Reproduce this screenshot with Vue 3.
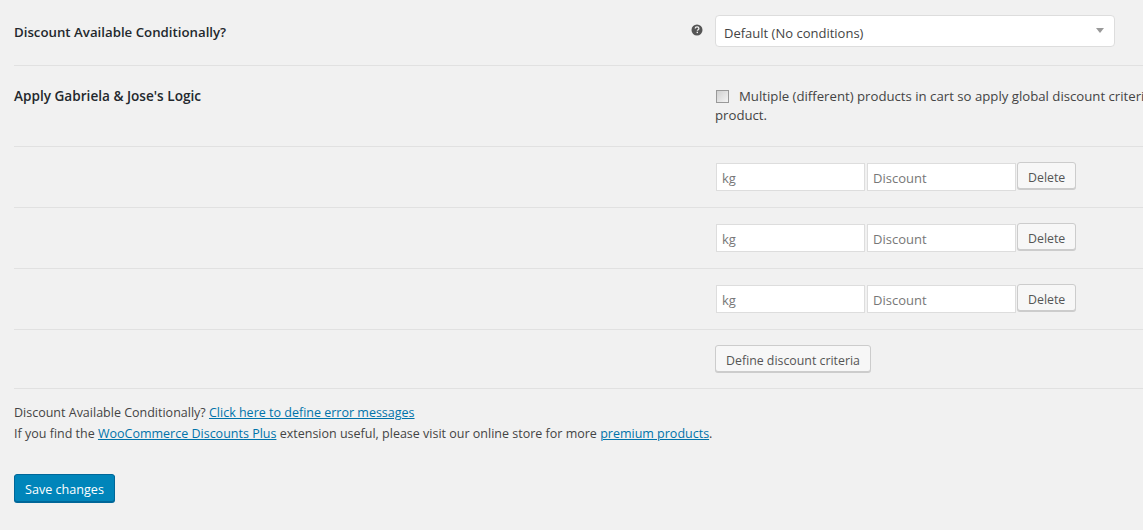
<template>
  <div class="page">
    <div class="row row-select">
      <div class="label">Discount Available Conditionally?</div>
      <div class="tip">
        <svg width="12" height="12" viewBox="0 0 12 12">
          <circle cx="6" cy="6" r="5.5" fill="#555" />
          <path d="M4.2 4.6c0-1.1.8-1.7 1.9-1.7s1.8.6 1.8 1.5c0 1.3-1.5 1.3-1.5 2.4" fill="none" stroke="#f1f1f1" stroke-width="1.3" />
          <rect x="5.6" y="7.7" width="1.4" height="1.4" fill="#f1f1f1" />
        </svg>
      </div>
      <div class="select">
        <span>Default (No conditions)</span>
        <i class="caret"></i>
      </div>
    </div>

    <div class="row row-check">
      <div class="label label-wide">Apply Gabriela &amp; Jose's Logic</div>
      <div class="tip"></div>
      <div class="check-text">
        <span class="check"></span>Multiple (different) products in cart so apply global discount criteria to each<br />product.
      </div>
    </div>

    <div v-for="n in 3" :key="n" class="row row-input">
      <div class="label"></div>
      <div class="tip"></div>
      <div class="fields">
        <input class="field" type="text" placeholder="kg" />
        <input class="field" type="text" placeholder="Discount" />
        <button class="btn" type="button">Delete</button>
      </div>
    </div>

    <div class="row row-define">
      <div class="label"></div>
      <div class="tip"></div>
      <div><button class="btn btn-define" type="button">Define discount criteria</button></div>
    </div>

    <p class="note">
      Discount Available Conditionally? <a href="#">Click here to define error messages</a><br />
      If you find the <a href="#">WooCommerce Discounts Plus</a> extension useful, please visit our online store for more <a href="#">premium products</a>.
    </p>

    <button class="save" type="button">Save changes</button>
  </div>
</template>

<script setup>
</script>

<style scoped>
.page {
  width: 1143px;
  height: 530px;
  overflow: hidden;
  box-sizing: border-box;
  padding-left: 14px;
  background: #f1f1f1;
  font-family: "Open Sans", "Liberation Sans", sans-serif;
  font-size: 13px;
  line-height: 19px;
  color: #444;
}

.row {
  display: grid;
  grid-template-columns: 676px 25px 1fr;
  width: 1129px;
  box-sizing: border-box;
  border-bottom: 1px solid #e1e1e1;
}

.row-select { height: 66px; padding-top: 15px; }
.row-check { height: 81px; padding-top: 21px; }
.row-input { height: 61px; padding-top: 16px; }
.row-define { height: 59px; padding-top: 15px; }

.label {
  font-weight: 600;
  color: #23282d;
  font-size: 13.25px;
}

.label-wide { font-size: 13.6px; line-height: 18px; }
.row-select .label { padding-top: 8px; }

.tip { padding-top: 9px; }
.tip svg { display: block; margin-left: 1px; }

.select {
  display: flex;
  justify-content: space-between;
  align-items: center;
  width: 400px;
  height: 32px;
  box-sizing: border-box;
  padding: 4px 8px 0;
  background: #fff;
  border: 1px solid #ddd;
  border-radius: 4px;
}

.caret {
  width: 0;
  height: 0;
  margin-right: 2px;
  margin-top: -6px;
  border-left: 4px solid transparent;
  border-right: 4px solid transparent;
  border-top: 5px solid #999;
}

.check-text {
  white-space: nowrap;
  font-size: 13.2px;
}

.check {
  display: inline-block;
  width: 13px;
  height: 13px;
  box-sizing: border-box;
  margin: 0 10px 0 1px;
  vertical-align: -2px;
  border: 1px solid #999;
  background: linear-gradient(135deg, #d0d0d0, #f4f4f4);
}

.fields {
  display: flex;
  align-items: flex-start;
  gap: 2px;
}

.field {
  width: 149px;
  height: 28px;
  box-sizing: border-box;
  margin: 0 0 0 1px;
  padding: 2px 5px 0;
  background: #fff;
  border: 1px solid #ddd;
  font: inherit;
  outline: none;
}

.field + .field { margin-left: 0; }
.field::placeholder { color: #777; opacity: 1; }

.btn {
  height: 27px;
  box-sizing: border-box;
  padding: 4px 10px 0;
  background: #f7f7f7;
  border: 1px solid #ccc;
  border-radius: 3px;
  box-shadow: 0 1px 0 #ccc;
  color: #555;
  font: inherit;
  font-size: 12.35px;
  line-height: 21px;
  white-space: nowrap;
}

.fields .btn { margin: -1px 0 0 -1px; }
.btn-define { display: block; }

.note {
  margin: 13px 0 0;
  font-size: 12.5px;
  line-height: 21px;
  color: #444;
}

.note a { color: #0073aa; }

.save {
  display: block;
  margin-top: 30px;
  height: 28px;
  box-sizing: border-box;
  padding: 4px 10px 0;
  background: #0085ba;
  border: 1px solid #006799;
  border-radius: 3px;
  box-shadow: 0 1px 0 #006799;
  color: #fff;
  font: inherit;
  font-size: 12.6px;
  line-height: 22px;
  white-space: nowrap;
}
</style>

<style>
html, body { background: #f1f1f1; overflow: hidden; }
</style>
